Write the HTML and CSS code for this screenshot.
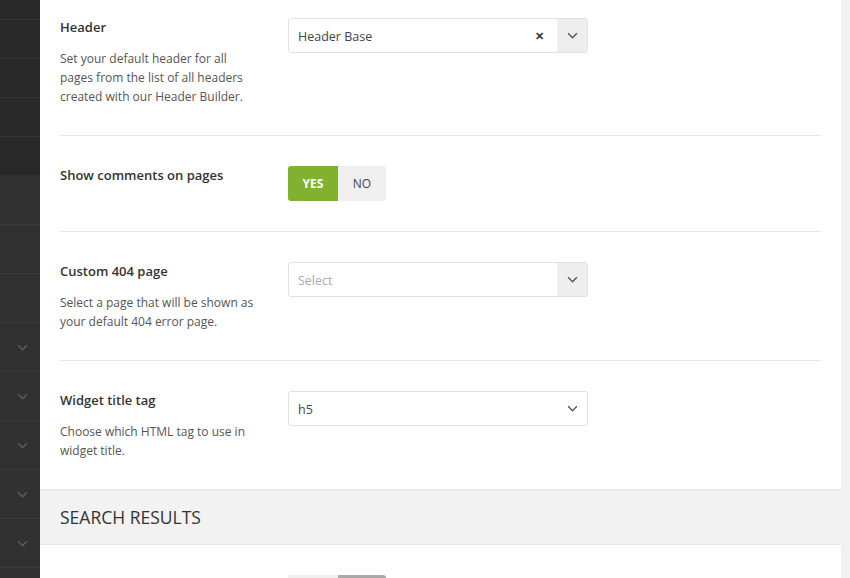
FILE: index.html
```html
<!DOCTYPE html>
<html>
<head>
<meta charset="utf-8">
<link rel="stylesheet" href="styles.css">
</head>
<body>
<div class="app">
  <aside class="sidebar">
    <div class="srow top first"></div>
    <div class="srow top"></div>
    <div class="srow top"></div>
    <div class="srow top"></div>
    <div class="srow top"></div>
    <div class="srow"></div>
    <div class="srow"></div>
    <div class="srow"></div>
    <div class="srow"><svg class="schev" viewBox="0 0 12 8"><path d="M1 1.5l5 5 5-5"/></svg></div>
    <div class="srow"><svg class="schev" viewBox="0 0 12 8"><path d="M1 1.5l5 5 5-5"/></svg></div>
    <div class="srow"><svg class="schev" viewBox="0 0 12 8"><path d="M1 1.5l5 5 5-5"/></svg></div>
    <div class="srow"><svg class="schev" viewBox="0 0 12 8"><path d="M1 1.5l5 5 5-5"/></svg></div>
    <div class="srow"><svg class="schev" viewBox="0 0 12 8"><path d="M1 1.5l5 5 5-5"/></svg></div>
    <div class="srow"></div>
  </aside>
  <main class="panel">
    <div class="opt first">
      <div class="lbl">
        <div class="ttl">Header</div>
        <div class="dsc">Set your default header for all<br>pages from the list of all headers<br>created with our Header Builder.</div>
      </div>
      <div class="ctl">
        <div class="sel">
          <span class="val">Header Base</span>
          <span class="clr">&#x2715;</span>
          <span class="arr"><svg viewBox="0 0 12 8"><path d="M1 1.5l5 5 5-5"/></svg></span>
        </div>
      </div>
    </div>
    <div class="opt short">
      <div class="lbl">
        <div class="ttl">Show comments on pages</div>
      </div>
      <div class="ctl">
        <div class="tog"><span class="on">YES</span><span class="off">NO</span></div>
      </div>
    </div>
    <div class="opt">
      <div class="lbl">
        <div class="ttl">Custom 404 page</div>
        <div class="dsc">Select a page that will be shown as<br>your default 404 error page.</div>
      </div>
      <div class="ctl">
        <div class="sel">
          <span class="val ph">Select</span>
          <span class="arr"><svg viewBox="0 0 12 8"><path d="M1 1.5l5 5 5-5"/></svg></span>
        </div>
      </div>
    </div>
    <div class="opt last">
      <div class="lbl">
        <div class="ttl">Widget title tag</div>
        <div class="dsc">Choose which HTML tag to use in<br>widget title.</div>
      </div>
      <div class="ctl">
        <div class="sel plain">
          <span class="val">h5</span>
          <span class="arr"><svg viewBox="0 0 12 8"><path d="M1 1.5l5 5 5-5"/></svg></span>
        </div>
      </div>
    </div>
    <div class="band">SEARCH RESULTS</div>
    <div class="opt">
      <div class="lbl"></div>
      <div class="ctl">
        <div class="tog dim"><span class="on"></span><span class="off"></span></div>
      </div>
    </div>
  </main>
</div>
</body>
</html>
```
FILE: styles.css
```css
html, body {
  margin: 0;
  padding: 0;
  background: #f1f1f1;
  overflow: hidden;
  height: 578px;
}
body {
  font-family: "Open Sans", "Noto Sans", sans-serif;
  color: #333;
}
.app {
  display: flex;
  height: 578px;
  width: 850px;
}
.sidebar {
  width: 40px;
  flex: none;
  background: #313131;
  display: flex;
  flex-direction: column;
}
.srow {
  height: 48px;
  border-top: 1px solid #3b3b3b;
  flex: none;
  display: flex;
  align-items: center;
  justify-content: center;
  box-sizing: content-box;
}
.srow.top {
  height: 38px;
  background: #282828;
  border-top-color: #343434;
}
.srow.top.first {
  height: 19px;
  border-top: none;
}
.srow.top + .srow:not(.top) {
  border-top: none;
  height: 49px;
}
.schev {
  width: 11px;
  height: 7px;
  fill: none;
  stroke: #5e5e5e;
  stroke-width: 1.6;
  margin-left: 4px;
}
.panel {
  flex: 1;
  margin-right: 9px;
  background: #fff;
  overflow: hidden;
}
.opt {
  margin: 0 20px;
  padding: 30px 0 29px;
  border-bottom: 1px solid #e5e5e5;
  display: flex;
  gap: 20px;
}
.opt.short {
  padding-bottom: 30px;
}
.opt.first {
  padding-top: 18px;
}
.opt.last {
  border-bottom: none;
  padding-bottom: 29px;
}
.lbl {
  width: 208px;
  flex: none;
}
.ttl {
  font-size: 13px;
  font-weight: 600;
  line-height: 18px;
  color: #333;
  white-space: nowrap;
}
.dsc {
  margin-top: 13px;
  font-size: 12px;
  line-height: 19px;
  color: #555;
  white-space: nowrap;
}
.ctl {
  width: 300px;
}
.sel {
  border: 1px solid #e1e1e1;
  border-radius: 3px;
  display: flex;
  align-items: center;
  box-sizing: border-box;
  height: 35px;
  overflow: hidden;
}
.val {
  flex: 1;
  padding-left: 9px;
  padding-top: 1px;
  font-size: 12.5px;
  color: #444;
}
.val.ph {
  color: #aaa;
}
.clr {
  width: 24px;
  font-size: 11px;
  font-weight: 700;
  color: #333;
  text-align: center;
  margin-right: 6px;
}
.arr {
  width: 30px;
  height: 100%;
  background: #eeeeee;
  display: flex;
  align-items: center;
  justify-content: center;
}
.sel.plain .arr {
  background: transparent;
}
.arr svg {
  width: 11px;
  height: 7px;
  fill: none;
  stroke: #555;
  stroke-width: 1.6;
}
.tog {
  display: inline-flex;
  height: 35px;
  border-radius: 3px;
  overflow: hidden;
}
.tog span {
  display: flex;
  align-items: center;
  justify-content: center;
  font-size: 12px;
}
.tog .on {
  width: 50px;
  background: #80b22f;
  color: #fff;
  font-weight: 700;
}
.tog .off {
  width: 48px;
  background: #efefef;
  color: #444;
}
.tog.dim .on {
  background: #efefef;
}
.tog.dim .off {
  background: #a9a9a9;
}
.band {
  background: #f2f2f2;
  border-top: 1px solid #e6e6e6;
  border-bottom: 1px solid #e6e6e6;
  height: 54px;
  line-height: 54px;
  padding-left: 20px;
  font-size: 17.5px;
  color: #333;
}
```
